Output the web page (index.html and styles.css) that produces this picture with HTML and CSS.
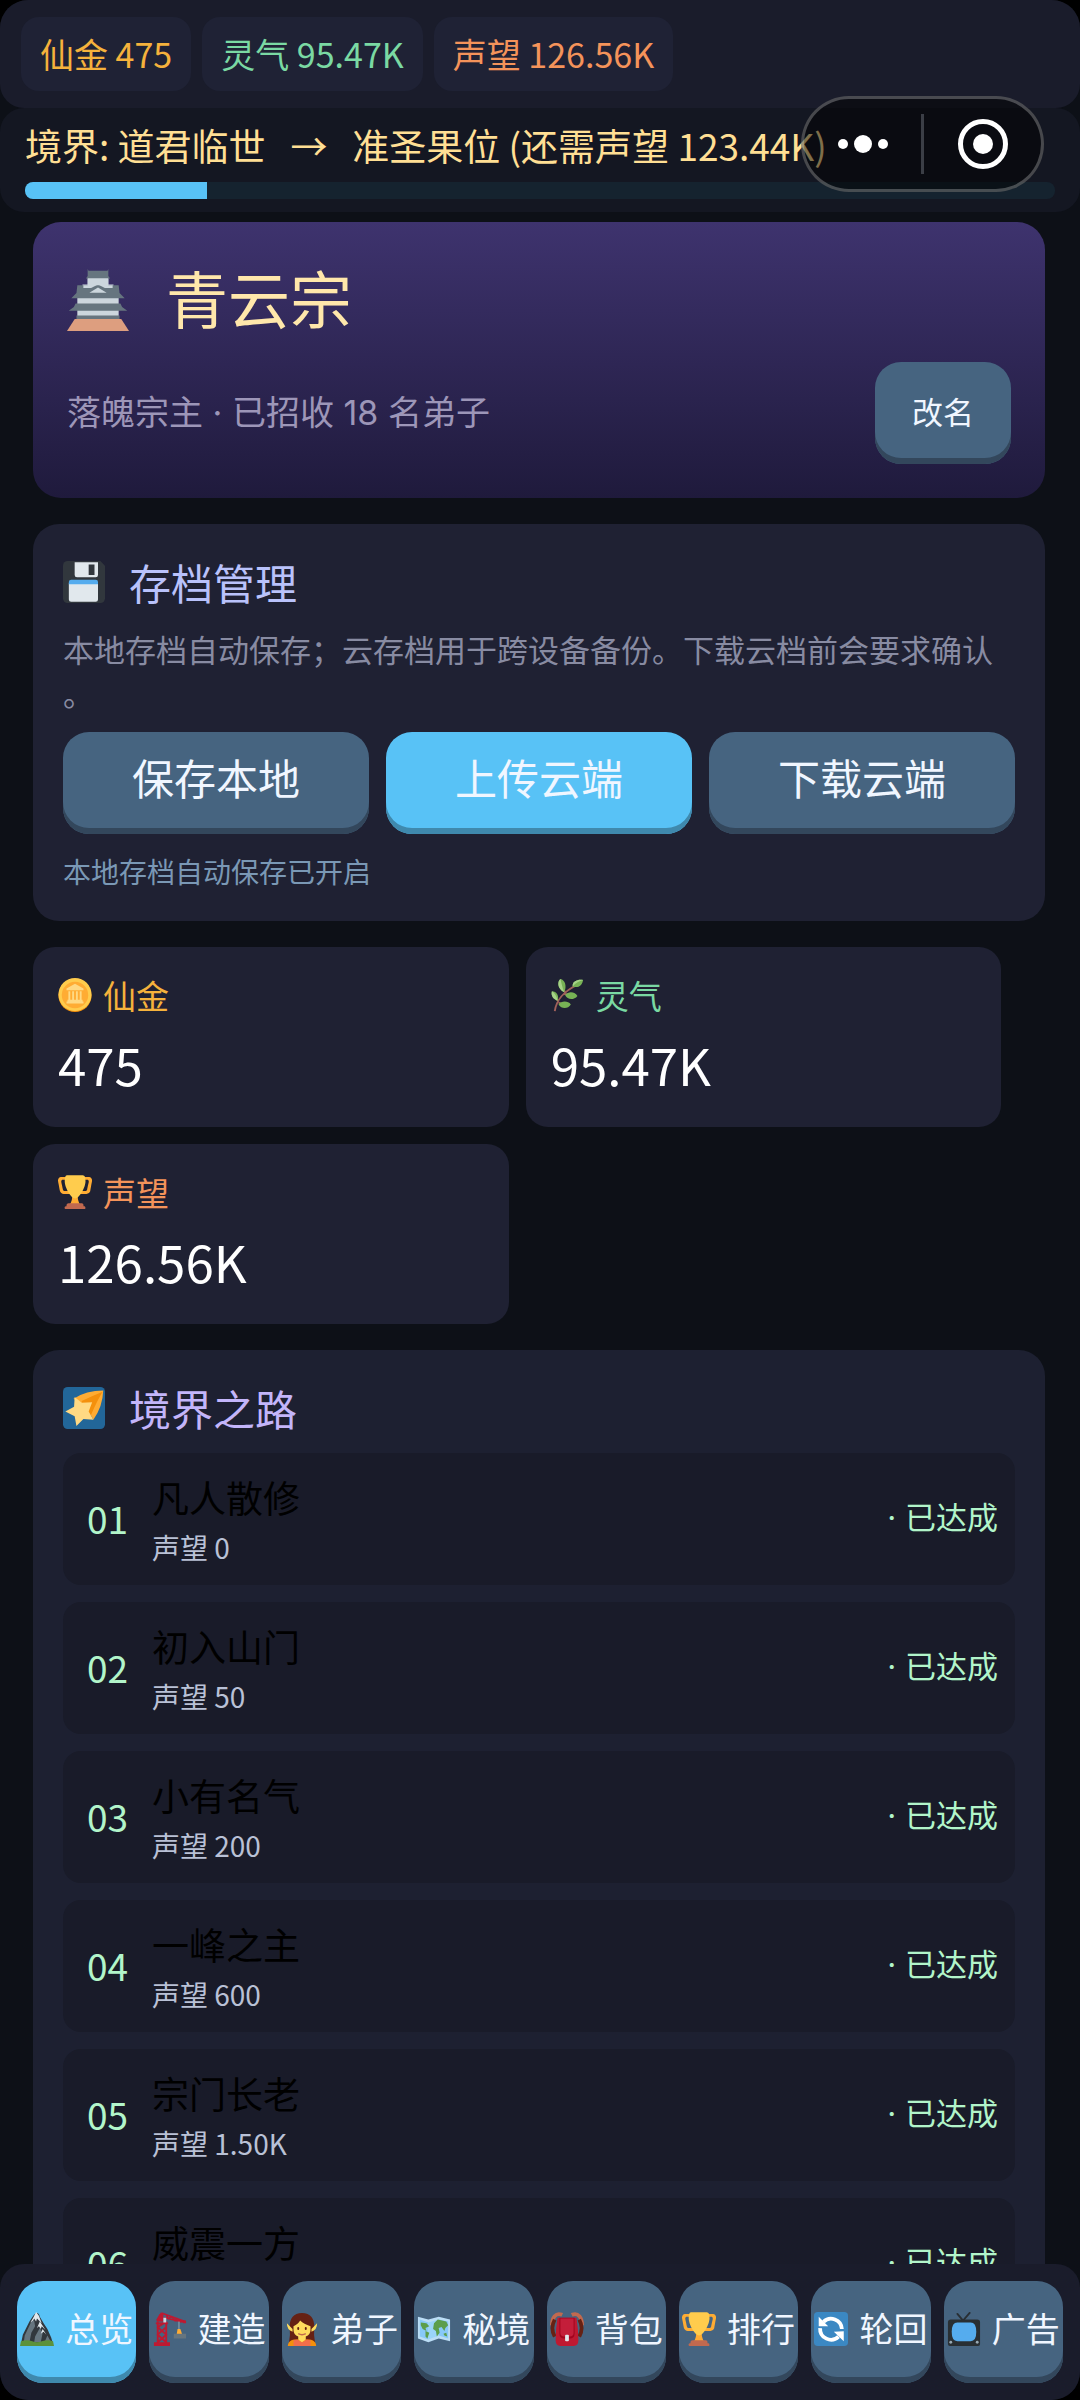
FILE: index.html
```html
<!DOCTYPE html>
<html lang="zh-CN">
<head>
<meta charset="utf-8">
<meta name="viewport" content="width=device-width, initial-scale=1">
<title>青云宗</title>
<link rel="stylesheet" href="styles.css">
</head>
<body>
<svg class="sprite" aria-hidden="true">
  <symbol id="trophy" viewBox="0 0 36 36">
    <path fill="#FFAC33" d="M5.123 5h6C12.227 5 13 4.896 13 6V4c0-1.104-.773-2-1.877-2h-8c-2 0-3.583 2.125-3 5 0 0 1.791 9.375 1.917 9.958C2.373 18.5 4.164 20 6.081 20h6.958c1.105 0-.039-1.896-.039-3v-2c0 1.104-.773 2-1.877 2h-4c-1.104 0-1.833-1.042-2-2S3.539 7.667 3.539 7.667C3.206 5.75 4.018 5 5.123 5zm25.812 0h-6C23.831 5 22 4.896 22 6V4c0-1.104 1.831-2 2.935-2h8c2 0 3.584 2.125 3 5 0 0-1.633 9.419-1.771 10-.354 1.5-2.042 3-4 3h-7.146C21.914 20 22 18.104 22 17v-2c0 1.104 1.831 2 2.935 2h4c1.104 0 1.834-1.042 2-2s1.584-7.333 1.584-7.333C32.851 5.75 32.04 5 30.935 5z"/>
    <path fill="#FFAC33" d="M20.832 22c0-6.958-2.709 0-2.709 0s-3-6.958-3 0-3.291 10-3.291 10h12.292c-.001 0-3.292-3.042-3.292-10z"/>
    <path fill="#FFCC4D" d="M29.123 6.577c0 6.775-6.77 18.192-11 18.192-4.231 0-11-11.417-11-18.192 0-5.195 1-6.319 3-6.319 1.374 0 6.025-.027 8-.027l7-.001c2.917-.001 4 .684 4 6.347z"/>
    <path fill="#C1694F" d="M27 33c0 1.104.227 2-.877 2h-16C9.018 35 9 34.104 9 33v-1c0-1.104 1.164-2 2.206-2h13.917c1.042 0 1.877.896 1.877 2v1z"/>
    <path fill="#C1694F" d="M29 34.625c0 .76.165 1.375-1.252 1.375H8.498C7.206 36 7 35.385 7 34.625v-.25C7 33.615 7.738 33 8.498 33h19.25c.759 0 1.252.615 1.252 1.375v.25z"/>
  </symbol>
  <symbol id="castle" viewBox="0 0 36 36">
    <path fill="#CCD6DD" d="M12 5h12v6H12zM9 9h18v14H9zM6 16h24v12H6z"/>
    <path fill="#DD9E7F" d="M4.500 29h27L36 36H0z"/>
    <path fill="#67757F" d="M5.500 27h25v2h-25z"/>
    <path fill="#66757F" d="M12 0l.5 1h11L24 0v4l1 1.500H11L12 4z"/>
    <path fill="#66757F" d="M6 9.500h24l.500 4.500 3 3H2.500l3-3z"/>
    <path fill="#CCD6DD" d="M12 5.500h12v4h2.500V11H22l-4-2-4 2H9.500V9.500H12zM13 13.800l5-3 5 3z"/>
    <path fill="#66757F" d="M5 20h26l1 2 3 2.200H1L4 22z"/>
  </symbol>
  <symbol id="floppy" viewBox="0 0 36 36">
    <path fill="#31373D" d="M4 0h28l4 4v28a4 4 0 0 1-4 4H4a4 4 0 0 1-4-4V4a4 4 0 0 1 4-4z"/>
    <path fill="#E1E8ED" d="M10 1h20v11a2 2 0 0 1-2 2H12a2 2 0 0 1-2-2zM5 19h25v14a2 2 0 0 1-2 2H7a2 2 0 0 1-2-2z"/>
    <path fill="#31373D" d="M22 3h5v9h-5z"/>
    <path fill="#55ACEE" d="M7 16h21a2 2 0 0 1 2 2v2H5v-2a2 2 0 0 1 2-2z"/>
  </symbol>
  <symbol id="coin" viewBox="0 0 36 36">
    <circle cx="18" cy="18.500" r="17.500" fill="#F4900C"/>
    <circle cx="18" cy="17.500" r="17.500" fill="#FFCC4D"/>
    <circle cx="18" cy="18" r="14" fill="#FFAC33"/>
    <path fill="#FFD983" d="M18 6l9 5v2H9v-2zM11 14h2v9h-2zM15 14h2v9h-2zM19 14h2v9h-2zM23 14h2v9h-2zM10 23h16v2H10zM9 25h18v2H9z"/>
  </symbol>
  <symbol id="herb" viewBox="0 0 36 36">
    <path d="M4 35C6 22 14 14 28 7M7 24l-2-5M15 16l-2-6M14 17l8 1M8 26l6 2" fill="none" stroke="#A0605A" stroke-width="2"/>
    <g fill="#77B255">
      <path d="M14 15C6 11 7 3 10 1c5 1 7 8 4 14zM23 9c-1-6 6-8 11-7-1 6-5 9-11 7zM7 24C1 22 0 17 1 14c5 0 8 5 6 10zM15 18c4-5 11-3 13 1-4 5-11 4-13-1zM8 28c3-4 10-4 13 0-3 5-10 5-13 0z"/>
    </g>
    <path fill="#A6D388" d="M14 15C6 11 7 3 10 1c1 4 2 9 4 14zM23 9c-1-6 6-8 11-7-4 1-8 3-11 7zM7 24C1 22 0 17 1 14c3 2 5 5 6 10z"/>
  </symbol>
  <symbol id="star" viewBox="0 0 36 36">
    <rect width="36" height="36" rx="4" fill="#226699"/>
    <path fill="#FFAC33" d="M9 10Q20 3 34.500 3 34 17 26 28l-5-9z"/>
    <path fill="#F4900C" d="M16 12Q24 8 34 4 29 12 24 24l-6-2z"/>
    <path fill="#FFD983" d="M10 8.500l6 5 9-.500-3 8 4 7-8.500-.500-6 6-1.500-8.500-8-4 7.500-4z"/>
  </symbol>
  <symbol id="mountain" viewBox="0 0 36 36">
    <path fill="#31373D" d="M18 1q2 0 3 4l4 7 4 6 4 9 2 7H1l2-10 7-14 4-6q2-3 4-3z"/>
    <path fill="#66757F" d="M12 10L5 25l-1 7h6l2-10 4-7-1-6zM21 17l-5 9-1 6h7l2-10zM29 25l-3 7h7z"/>
    <path fill="#E1E8ED" d="M17 0l-3 6-3 5 3-2 1-2 2 3 1-3 5 5-3-8zM21 10l-3 7 2-2 2 3 1-3 4 4zM24 18l-2 5 3-2 3 3z"/>
    <path fill="#5C913B" d="M1 31q6-2 12 0 5 2 10 0 7-2 12 0l1 5H0z"/>
  </symbol>
  <symbol id="crane" viewBox="0 0 36 36">
    <path fill="none" stroke="#BE1931" stroke-width="2" d="M5 10v23M14 10v23M5 32l9-8-9-8 9-6M14 32l-9-8 9-8"/>
    <path fill="none" stroke="#BE1931" stroke-width="1.600" d="M9 1l25 9M12 6l21 5M9 1L4 9M14 3l2 4 4-2 3 4 3-2 4 4"/>
    <path fill="#BE1931" d="M7 2h4v8H4V8zM3 11h13v2H3zM1 32h17v4H1zM32 9h3v3h-3z"/>
    <path fill="#CCD6DD" d="M11 6h3v5h-3z"/>
    <path fill="#99AAB5" d="M27 10h1v9h-1z"/>
    <path fill="#FFAC33" d="M26 18h3l2 6h-6z"/>
    <path fill="#66757F" d="M22 23h13v5H22z"/>
  </symbol>
  <symbol id="elf" viewBox="0 0 36 36">
    <path fill="#662113" d="M18 1C9 1 5 7 5 15q1 10-1 19l4 2h20l4-2q-2-9-1-19C31 7 27 1 18 1z"/>
    <path fill="#F4900C" d="M3 36c0-5 4-7 9-7h12c5 0 9 2 9 7z"/>
    <path fill="#F36E4B" d="M9 30l4-1 5 3 5-3 4 1v6H9z"/>
    <path fill="#FFDC5D" d="M8 18l-6-6q0 7 6 9zM28 18l6-6q0 7-6 9zM9 15q5-2 7-6 4 4 11 6v4q0 5-5 7v3l-4 3-4-3v-3q-5-2-5-7z"/>
    <path stroke="#662113" stroke-width="2" stroke-linecap="round" d="M14 17v1M22 17v1"/>
    <path fill="none" stroke="#C1694F" stroke-width="1.500" d="M14 23q4 2 8 0"/>
  </symbol>
  <symbol id="map" viewBox="0 0 36 36">
    <path fill="#BBDDF5" d="M1 5l11 3 11-3 12 3v23l-12-3-11 4-11-4z"/>
    <path fill="#88C9F9" d="M3 8l9 3v18l-9-3zM23 8l10 2v18l-10-3z"/>
    <path fill="#9AD4F8" d="M12 11l11-3v17l-11 4z"/>
    <path fill="#5C9E4B" d="M4 11l6 1 3 3-4 2 1 3-4-2-2-4zM9 20l4 2-2 6-2-2zM18 12l4-4 9 2 2 4-3 3-1 3-3-4-3 1 1 5-3 4-1-6-3-2zM28 23l3-1 1 4-3-1z"/>
  </symbol>
  <symbol id="bag" viewBox="0 0 36 36">
    <path fill="none" stroke="#C1694F" stroke-width="4" d="M13 3C6 0 2 6 2 14M23 3c7-3 11 3 11 11"/>
    <path fill="none" stroke="#662113" stroke-width="4" d="M5 8q-5 9 0 18M31 8q5 9 0 18"/>
    <path fill="#BE1931" d="M8 6h20q2 11 2 24 0 6-5 6H11q-5 0-5-6Q6 17 8 6z"/>
    <path fill="#A0041E" d="M10 6h16v17q0 5-5 5h-6q-5 0-5-5z"/>
    <path fill="#C41E3A" d="M11 7h14v15q0 4-4 4h-6q-4 0-4-4z"/>
    <rect x="16" y="24" width="4" height="7" rx="1" fill="#E1E8ED"/>
  </symbol>
  <symbol id="cycle" viewBox="0 0 36 36">
    <rect width="36" height="36" rx="4" fill="#3B88C3"/>
    <path fill="none" stroke="#fff" stroke-width="4" d="M10 10.500A11.500 11.500 0 0 1 29.500 18M6.500 17A11.500 11.500 0 0 0 26 26"/>
    <path fill="#fff" d="M5 5v10h10zM31.500 31V20.500L21 21z"/>
  </symbol>
  <symbol id="tv" viewBox="0 0 36 36">
    <path fill="none" stroke="#292F33" stroke-width="2" stroke-linecap="round" d="M11 2l6 7 7-8"/>
    <path fill="#292F33" d="M4 8h28a3 3 0 0 1 3 3v23a2 2 0 0 1-2 2H3a2 2 0 0 1-2-2V11a3 3 0 0 1 3-3z"/>
    <path fill="#55ACEE" d="M11 11h14q6 0 6 10t-6 10H11q-6 0-6-10t6-10z"/>
    <circle cx="4" cy="32" r="1.500" fill="#99AAB5"/><circle cx="32" cy="32" r="1.500" fill="#99AAB5"/>
  </symbol>
</svg>

<div class="app">
  <header>
    <ul class="chips">
      <li class="chip gold">仙金 475</li>
      <li class="chip green">灵气 95.47K</li>
      <li class="chip orange">声望 126.56K</li>
    </ul>
    <section class="realm">
      <p class="realm-text">境界: 道君临世 &nbsp;&nbsp;→&nbsp;&nbsp; 准圣果位 (还需声望 123.44K)</p>
      <div class="bar" role="progressbar" aria-label="境界进度" aria-valuenow="18" aria-valuemin="0" aria-valuemax="100"><div class="bar-fill" style="width: 17.7%"></div></div>
    </section>
    <div class="capsule">
      <button class="capsule-button" type="button" aria-label="更多"><svg width="56" height="56" viewBox="0 0 56 56" fill="#fff"><circle cx="8" cy="28" r="5"/><circle cx="28" cy="28" r="9"/><circle cx="48" cy="28" r="5"/></svg></button>
      <span class="capsule-divider"></span>
      <button class="capsule-button" type="button" aria-label="关闭"><svg width="56" height="56" viewBox="0 0 56 56"><circle cx="28" cy="28" r="22.500" fill="none" stroke="#fff" stroke-width="5"/><circle cx="28" cy="28" r="10" fill="#fff"/></svg></button>
    </div>
  </header>

  <main>
    <section class="hero">
      <h1><svg class="icon-xl"><use href="#castle"/></svg>青云宗</h1>
      <div class="hero-row">
        <p class="muted">落魄宗主 · 已招收 18 名弟子</p>
        <button class="button small" type="button">改名</button>
      </div>
    </section>

    <section class="card">
      <h2><svg class="icon-l"><use href="#floppy"/></svg>存档管理</h2>
      <p class="desc">本地存档自动保存；云存档用于跨设备备份。下载云档前会要求确认。</p>
      <div class="actions">
        <button class="button" type="button">保存本地</button>
        <button class="button primary" type="button">上传云端</button>
        <button class="button" type="button">下载云端</button>
      </div>
      <p class="status">本地存档自动保存已开启</p>
    </section>

    <section class="stats">
      <div class="stat"><h3 class="gold"><svg class="icon-m"><use href="#coin"/></svg>仙金</h3><p>475</p></div>
      <div class="stat"><h3 class="green"><svg class="icon-m"><use href="#herb"/></svg>灵气</h3><p>95.47K</p></div>
      <div class="stat"><h3 class="orange"><svg class="icon-m"><use href="#trophy"/></svg>声望</h3><p>126.56K</p></div>
    </section>

    <section class="card path">
      <h2><svg class="icon-l"><use href="#star"/></svg>境界之路</h2>
      <ol>
        <li><span class="num">01</span><div class="info"><h3>凡人散修</h3><p>声望 0</p></div><span class="done">· 已达成</span></li>
        <li><span class="num">02</span><div class="info"><h3>初入山门</h3><p>声望 50</p></div><span class="done">· 已达成</span></li>
        <li><span class="num">03</span><div class="info"><h3>小有名气</h3><p>声望 200</p></div><span class="done">· 已达成</span></li>
        <li><span class="num">04</span><div class="info"><h3>一峰之主</h3><p>声望 600</p></div><span class="done">· 已达成</span></li>
        <li><span class="num">05</span><div class="info"><h3>宗门长老</h3><p>声望 1.50K</p></div><span class="done">· 已达成</span></li>
        <li><span class="num">06</span><div class="info"><h3>威震一方</h3></div><span class="done">· 已达成</span></li>
      </ol>
    </section>
  </main>

  <nav>
    <button class="button primary tab" type="button" aria-current="page"><svg class="icon-s"><use href="#mountain"/></svg>总览</button>
    <button class="button tab" type="button"><svg class="icon-s"><use href="#crane"/></svg>建造</button>
    <button class="button tab" type="button"><svg class="icon-s"><use href="#elf"/></svg>弟子</button>
    <button class="button tab" type="button"><svg class="icon-s"><use href="#map"/></svg>秘境</button>
    <button class="button tab" type="button"><svg class="icon-s"><use href="#bag"/></svg>背包</button>
    <button class="button tab" type="button"><svg class="icon-s"><use href="#trophy"/></svg>排行</button>
    <button class="button tab" type="button"><svg class="icon-s"><use href="#cycle"/></svg>轮回</button>
    <button class="button tab" type="button"><svg class="icon-s"><use href="#tv"/></svg>广告</button>
  </nav>
</div>
</body>
</html>
```
FILE: styles.css
```css
* { box-sizing: border-box; }
html { background: #000; }
body {
  margin: 0;
  font-family: "Noto Sans CJK SC", sans-serif;
  font-weight: 400;
  color: #fff;
  text-spacing-trim: space-all;
}
h1, h2, h3, p, ul, ol { margin: 0; padding: 0; font-weight: inherit; }
ul, ol { list-style: none; }
button { font: inherit; color: inherit; border: 0; padding: 0; margin: 0; }
svg { display: block; flex: none; }
.sprite { position: absolute; width: 0; height: 0; }

.app {
  display: flex;
  flex-direction: column;
  height: 100vh;
  background: #0d1017;
  border-radius: 28px;
  overflow: hidden;
}
header { position: relative; }

.gold { color: #f5b23c; }
.green { color: #7ad9a3; }
.orange { color: #f4935a; }

.chips {
  display: flex;
  gap: 11px;
  padding: 17px 21px;
  background: #1a1c2b;
  border-radius: 24px;
}
.chip {
  padding: 0 19px;
  font-size: 34px;
  line-height: 74px;
  white-space: nowrap;
  background: #1f2235;
  border-radius: 18px;
}
.realm {
  padding: 13px 25px;
  background: #141722;
  border-radius: 24px;
}
.realm-text {
  margin-bottom: 13px;
  font-size: 37px;
  line-height: 48px;
  white-space: nowrap;
  color: #ffdf94;
}
.bar {
  height: 17px;
  background: #15232f;
  border-radius: 8px;
  overflow: hidden;
}
.bar-fill { height: 100%; background: #58c2f6; }

/* host app menu, floats over the header */
.capsule {
  position: absolute;
  top: 96px;
  right: 36px;
  display: flex;
  align-items: center;
  width: 243px;
  height: 96px;
  background: rgba(0, 0, 0, .5);
  border: 3px solid rgba(255, 255, 255, .25);
  border-radius: 48px;
}
.capsule-button {
  flex: 1;
  display: flex;
  align-items: center;
  justify-content: center;
  background: none;
}
.capsule-divider { width: 3px; height: 60px; background: #3b3e46; }

main {
  flex: 1;
  min-height: 0;
  padding: 10px 35px 0 33px;
  overflow-y: auto;
  scrollbar-width: none;
  display: flex;
  flex-direction: column;
  gap: 26px;
}
main > * { flex: none; }

.button {
  display: flex;
  align-items: center;
  justify-content: center;
  height: 102px;
  font-size: 42px;
  white-space: nowrap;
  padding-bottom: 14px;
  color: #f0f6ff;
  background: #466480;
  border-radius: 26px;
  box-shadow: inset 0 -6px #33475c;
}
.primary { background: #58c2f6; box-shadow: inset 0 -6px #3f89ad; }
.small { width: 136px; padding-bottom: 5px; font-size: 31px; }

.hero {
  padding: 34px;
  background: linear-gradient(#3e336e, #1f1a3c);
  border-radius: 28px;
}
h1 {
  display: flex;
  align-items: center;
  gap: 37px;
  margin-bottom: 24px;
  font-size: 62px;
  line-height: 82px;
  color: #ffe7ab;
}
.icon-xl { width: 62px; height: 62px; margin-top: 5px; }
.icon-l { width: 42px; height: 42px; }
.icon-m { width: 34px; height: 34px; }
.icon-s { width: 34px; height: 34px; margin-top: 4px; }
.hero-row { display: flex; align-items: center; justify-content: space-between; }
.muted {
  font-family: Inter, "Noto Sans CJK SC", sans-serif;
  font-size: 34px;
  line-height: 50px;
  color: #9d96b8;
}

.card {
  padding: 30px;
  background: #1f2133;
  border-radius: 26px;
}
h2 {
  display: flex;
  align-items: center;
  gap: 24px;
  margin-bottom: 17px;
  font-size: 42px;
  line-height: 56px;
  color: #b9c2fb;
}
.desc {
  margin-bottom: 17px;
  font-size: 31px;
  line-height: 44px;
  line-break: anywhere;
  color: #888ba2;
}
.actions { display: grid; grid-template-columns: repeat(3, 1fr); gap: 17px; }
.status { margin-top: 17px; font-size: 28px; line-height: 40px; color: #7a98b5; }

.stats { display: grid; grid-template-columns: 47% 47%; gap: 17px; }
.stat { padding: 26px 25px; background: #1f2133; border-radius: 22px; }
.stat h3 {
  display: flex;
  align-items: center;
  gap: 11px;
  margin-bottom: 10px;
  font-size: 33px;
  line-height: 44px;
}
.stat p { font-size: 51px; line-height: 74px; }

.path { background: #1d2031; }
.path ol { display: grid; gap: 17px; }
.path h2 { color: #c3b5fa; }
.path li {
  display: flex;
  align-items: center;
  gap: 17px;
  height: 132px;
  padding: 18px 17px;
  background: #191b29;
  border-radius: 18px;
}
.num { width: 55px; padding-bottom: 3px; text-align: center; font-size: 37px; color: #b2f5ca; }
.info { flex: 1; align-self: flex-start; }
.info h3 { margin-bottom: 4px; font-size: 37px; line-height: 52px; color: #000; }
.info p { font-size: 28px; line-height: 40px; color: #b9c1d6; }
.done {
  padding-bottom: 3px;
  font-family: Inter, "Noto Sans CJK SC", sans-serif;
  font-size: 31px;
  line-height: 44px;
  color: #b2f5ca;
}

nav {
  display: grid;
  grid-template-columns: repeat(8, 1fr);
  gap: 13px;
  padding: 17px;
  background: #1a1c2b;
  border-radius: 24px;
}
.tab { gap: 11px; padding-bottom: 10px; font-size: 34px; }
```
